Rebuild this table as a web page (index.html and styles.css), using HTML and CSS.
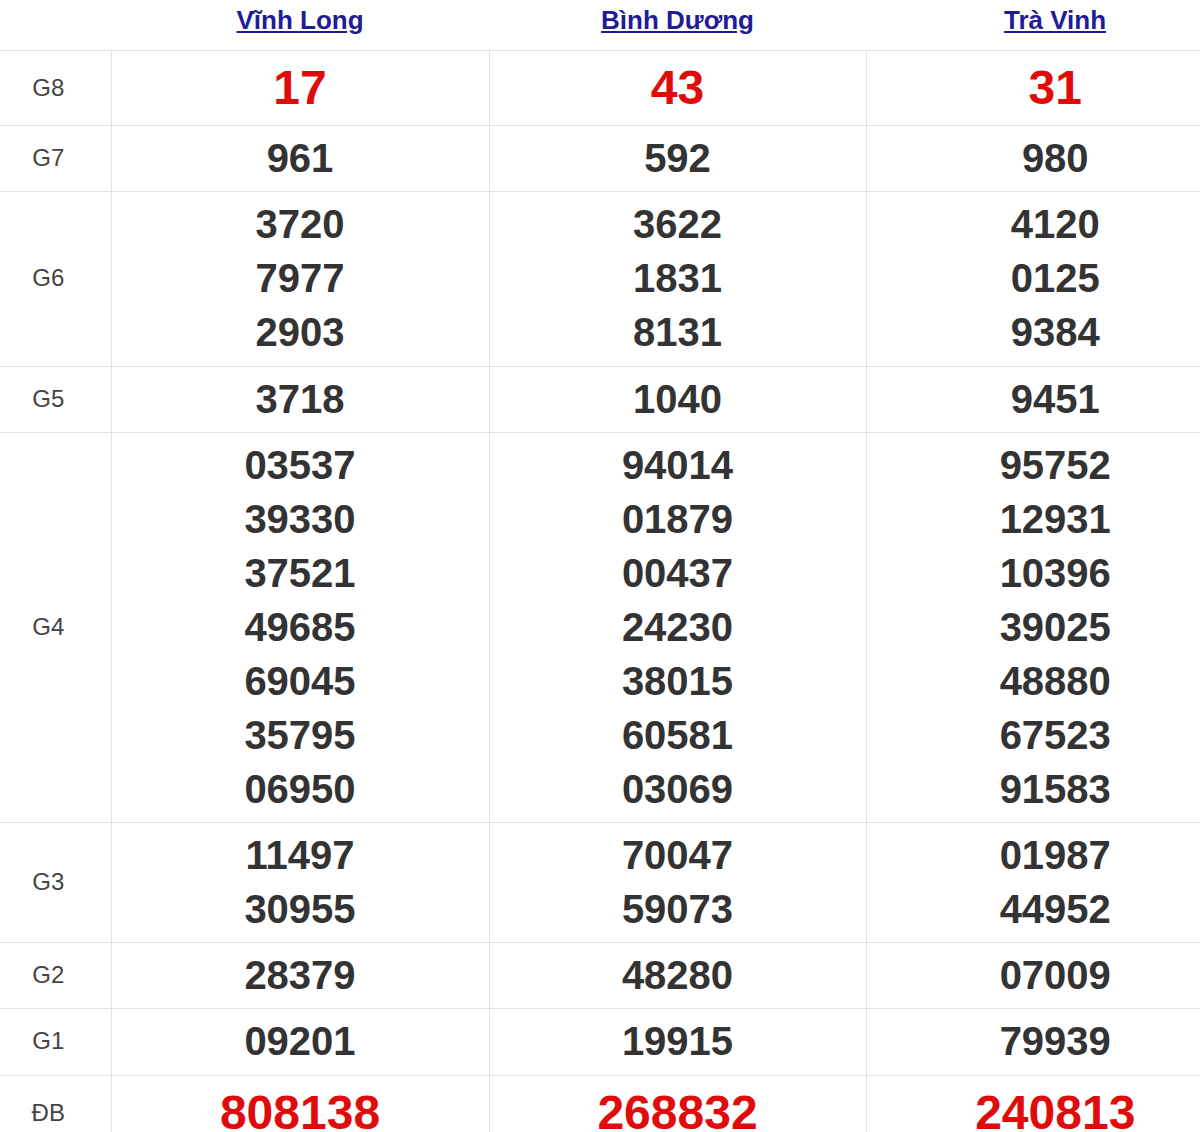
FILE: index.html
```html
<!DOCTYPE html>
<html lang="vi">
<head>
<meta charset="utf-8">
<title>Kết quả xổ số</title>
<link rel="stylesheet" href="styles.css">
</head>
<body>
<div class="wrap">
<table class="kq">
  <colgroup>
    <col class="c-label">
    <col class="c-prov">
    <col class="c-prov2">
    <col class="c-prov">
  </colgroup>
  <thead>
    <tr>
      <th class="h-label"></th>
      <th><a href="#">Vĩnh Long</a></th>
      <th><a href="#">Bình Dương</a></th>
      <th><a href="#">Trà Vinh</a></th>
    </tr>
  </thead>
  <tbody>
    <tr class="big">
      <td class="lbl">G8</td>
      <td class="red">17</td>
      <td class="red">43</td>
      <td class="red">31</td>
    </tr>
    <tr>
      <td class="lbl">G7</td>
      <td>961</td>
      <td>592</td>
      <td>980</td>
    </tr>
    <tr class="tall">
      <td class="lbl">G6</td>
      <td><div>3720</div><div>7977</div><div>2903</div></td>
      <td><div>3622</div><div>1831</div><div>8131</div></td>
      <td><div>4120</div><div>0125</div><div>9384</div></td>
    </tr>
    <tr>
      <td class="lbl">G5</td>
      <td>3718</td>
      <td>1040</td>
      <td>9451</td>
    </tr>
    <tr>
      <td class="lbl">G4</td>
      <td><div>03537</div><div>39330</div><div>37521</div><div>49685</div><div>69045</div><div>35795</div><div>06950</div></td>
      <td><div>94014</div><div>01879</div><div>00437</div><div>24230</div><div>38015</div><div>60581</div><div>03069</div></td>
      <td><div>95752</div><div>12931</div><div>10396</div><div>39025</div><div>48880</div><div>67523</div><div>91583</div></td>
    </tr>
    <tr>
      <td class="lbl">G3</td>
      <td><div>11497</div><div>30955</div></td>
      <td><div>70047</div><div>59073</div></td>
      <td><div>01987</div><div>44952</div></td>
    </tr>
    <tr>
      <td class="lbl">G2</td>
      <td>28379</td>
      <td>48280</td>
      <td>07009</td>
    </tr>
    <tr class="tall">
      <td class="lbl">G1</td>
      <td>09201</td>
      <td>19915</td>
      <td>79939</td>
    </tr>
    <tr class="big">
      <td class="lbl">ĐB</td>
      <td class="red">808138</td>
      <td class="red">268832</td>
      <td class="red">240813</td>
    </tr>
  </tbody>
</table>
</div>
</body>
</html>
```

FILE: styles.css
```css
html, body {
  margin: 0;
  padding: 0;
  background: #fff;
  overflow: hidden;
}

.wrap {
  width: 1200px;
  overflow: hidden;
}

.kq {
  width: 1244px;
  border-collapse: collapse;
  table-layout: fixed;
  font-family: "Liberation Sans", Arial, sans-serif;
}

.c-label { width: 111px; }
.c-prov { width: 378px; }
.c-prov2 { width: 377px; }

.kq th {
  padding: 5px 0 15px;
  line-height: 30px;
  font-size: 26px;
  font-weight: bold;
  text-align: center;
  border-bottom: 1px solid #e2e2e2;
}

.kq th a {
  color: #1f1c96;
  text-decoration: underline;
  text-underline-offset: 2px;
}

.kq td {
  border-top: 1px solid #e2e2e2;
  border-left: 1px solid #e2e2e2;
  padding: 5px 0 6px;
  text-align: center;
  vertical-align: middle;
  font-size: 40px;
  font-weight: bold;
  line-height: 54px;
  color: #333;
}

.kq tr.tall td {
  padding-bottom: 7px;
}

.kq td.lbl {
  border-left: none;
  font-size: 24px;
  font-weight: normal;
  color: #444;
  text-align: center;
  padding-right: 14px;
}

.kq tr.big td.red {
  color: #e00b0b;
  font-size: 48px;
  line-height: 63px;
}
```
